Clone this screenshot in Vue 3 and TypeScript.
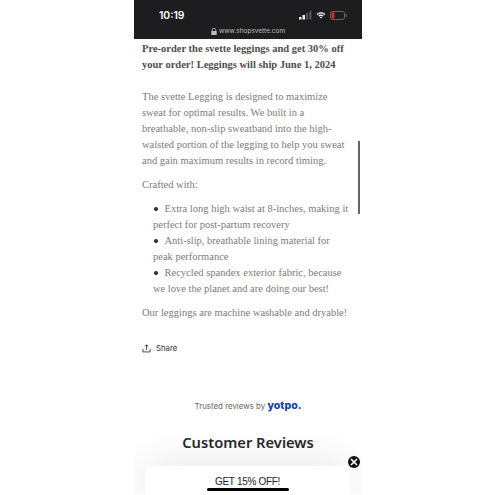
<template>
  <div class="page">
    <div class="phone">
      <header class="status">
        <div class="status-row">
          <span class="time">10:19</span>
          <div class="status-icons">
            <svg width="13" height="9" viewBox="0 0 13 9">
              <rect x="0" y="6" width="2.500" height="2.500" fill="#eee" />
              <rect x="3.500" y="4" width="2.500" height="4.500" fill="#eee" />
              <rect x="7" y="2" width="2.200" height="6.500" fill="#555" />
              <rect x="10.300" y="0" width="2.200" height="8.500" fill="#555" />
            </svg>
            <svg width="10" height="8" viewBox="0 0 13 10">
              <path d="M0.800 3.600C4 0.600 9 0.600 12.200 3.600L11 4.900C8.400 2.600 4.600 2.600 2 4.900Z" fill="#fff" />
              <path d="M3 5.800C5 4 8 4 10 5.800L8.800 7C7.500 5.900 5.500 5.900 4.200 7Z" fill="#fff" />
              <path d="M5.100 8C5.900 7.300 7.100 7.300 7.900 8L6.500 9.500Z" fill="#fff" />
            </svg>
            <svg width="17" height="9" viewBox="0 0 17 9">
              <rect x="0.500" y="0.500" width="14" height="8" rx="2" fill="none" stroke="#666" />
              <rect x="1.500" y="1.500" width="3" height="6" rx="1" fill="#e0262b" />
              <rect x="15.500" y="3" width="1.200" height="3" fill="#666" />
            </svg>
          </div>
        </div>
        <div class="url">
          <svg width="6" height="7" viewBox="0 0 6 7">
            <path d="M1.200 3V2a1.800 1.800 0 0 1 3.600 0v1" fill="none" stroke="#bbb" stroke-width="0.800" />
            <rect x="0.300" y="3" width="5.400" height="4" rx="0.600" fill="#bbb" />
          </svg>
          <span>www.shopsvette.com</span>
        </div>
      </header>

      <main class="content">
        <p class="lead">Pre-order the svette leggings and get 30% off your order! Leggings will ship June 1, 2024</p>
        <p>The svette Legging is designed to maximize sweat for optimal results. We built in a breathable, non-slip sweatband into the high-waisted portion of the legging to help you sweat and gain maximum results in record timing.</p>
        <p>Crafted with:</p>
        <ul>
          <li v-for="item in features" :key="item">{{ item }}</li>
        </ul>
        <p>Our leggings are machine washable and dryable!</p>
        <div class="share">
          <svg width="9" height="9" viewBox="0 0 10 10" fill="none" stroke="#333" stroke-width="1">
            <path d="M5 6.500V1M3.200 2.700L5 0.900L6.800 2.700" />
            <path d="M1 5.500V8.800H9V5.500" />
          </svg>
          <span>Share</span>
        </div>
      </main>

      <section class="reviews">
        <div class="trusted">Trusted reviews by <b>yotpo.</b></div>
        <h2>Customer Reviews</h2>
      </section>

      <div class="scrollbar"></div>
      <div class="popup">GET 15% OFF!</div>
      <div class="close">
        <svg width="8" height="8" viewBox="0 0 8 8" stroke="#fff" stroke-width="1.700">
          <path d="M1 1L7 7M7 1L1 7" />
        </svg>
      </div>
      <div class="home"></div>
    </div>
  </div>
</template>

<script setup lang="ts">
const features: string[] = [
  'Extra long high waist at 8-inches, making it perfect for post-partum recovery',
  'Anti-slip, breathable lining material for peak performance',
  'Recycled spandex exterior fabric, because we love the planet and are doing our best!',
]
</script>

<style>
html,
body {
  margin: 0;
  background: #fff;
}
</style>

<style scoped>
.page {
  width: 495px;
  height: 495px;
  overflow: hidden;
  display: flex;
  justify-content: center;
  background: #fff;
}
.phone {
  position: relative;
  width: 228px;
  height: 495px;
  margin-left: 1px;
  overflow: hidden;
  background: #fff;
}
.status {
  height: 39px;
  background: #1d1d1f;
  color: #fff;
  box-sizing: border-box;
  padding-top: 9px;
}
.status-row {
  display: flex;
  justify-content: space-between;
  align-items: center;
  padding: 0 15px 0 25px;
}
.time {
  font: 600 10.300px "Inter", sans-serif;
}
.status-icons {
  display: flex;
  align-items: center;
  gap: 4px;
}
.url {
  display: flex;
  justify-content: center;
  align-items: center;
  gap: 2px;
  margin-top: 6px;
  font: 6.500px "Inter", sans-serif;
  color: #bdbdbd;
}
.content {
  padding: 2px 11px 0 8px;
  font-family: "Liberation Serif", serif;
  font-size: 10.500px;
  line-height: 16px;
  color: #7b7b7b;
}
.content p {
  margin: 0 0 8px;
}
.content .lead {
  color: #4d4d4d;
  font-weight: 700;
  margin-bottom: 16px;
}
ul {
  margin: 0 0 8px;
  padding: 0 0 0 11px;
  list-style: none;
}
li::before {
  content: "";
  display: inline-block;
  width: 3.500px;
  height: 3.500px;
  margin: 0 7px 1.500px 1px;
  border-radius: 50%;
  background: #333;
}
.share {
  display: flex;
  align-items: center;
  gap: 5px;
  margin-top: 19px;
  font: 7.800px/16px "Inter", sans-serif;
  color: #333;
}
.reviews {
  margin-top: 42px;
  text-align: center;
}
.trusted {
  font: 7.900px/16px "Inter", sans-serif;
  color: #666;
}
.trusted b {
  font: 800 10.600px/16px "Inter", sans-serif;
  color: #1b3fae;
}
h2 {
  margin: 18px 0 0;
  font: 600 14.700px/20px "Noto Sans", sans-serif;
  color: #2a2a2a;
}
.scrollbar {
  position: absolute;
  left: 224px;
  top: 141px;
  width: 2px;
  height: 73px;
  background: #666;
}
.popup {
  position: absolute;
  left: 11px;
  width: 205px;
  top: 466px;
  height: 29px;
  box-sizing: border-box;
  padding-top: 9px;
  background: #fff;
  border-radius: 5px 5px 0 0;
  box-shadow: 0 0 40px rgba(0, 0, 0, 0.12);
  text-align: center;
  font: 10px/14px "Liberation Sans", sans-serif;
  letter-spacing: -0.300px;
  color: #222;
}
.close {
  position: absolute;
  left: 214px;
  top: 456px;
  width: 12px;
  height: 12px;
  border-radius: 50%;
  background: #111;
  display: flex;
  align-items: center;
  justify-content: center;
}
.home {
  position: absolute;
  left: 73px;
  top: 488px;
  width: 82px;
  height: 3px;
  border-radius: 2px;
  background: #000;
}
</style>
